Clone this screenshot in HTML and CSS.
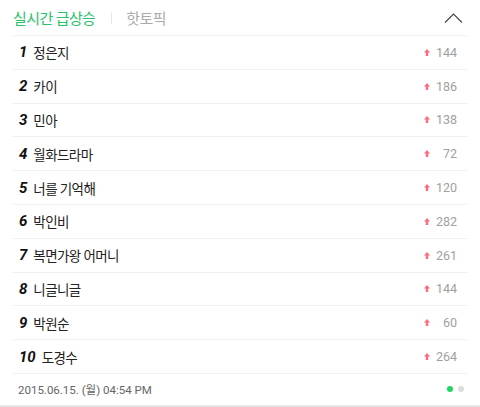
FILE: index.html
```html
<!DOCTYPE html>
<html lang="ko">
<head>
<meta charset="utf-8">
<link rel="stylesheet" href="styles.css">
</head>
<body>
<div class="widget">
  <div class="tabs">
    <span class="tab active">실시간 급상승</span>
    <span class="sep"></span>
    <span class="tab">핫토픽</span>
    <svg class="chev" width="19" height="10" viewBox="0 0 19 10"><path d="M1 9.5 L9.5 1 L18 9.5" fill="none" stroke="#444" stroke-width="1.1"/></svg>
  </div>
  <ul class="list">
    <li class="row"><span class="rank">1</span><span class="name">정은지</span><span class="up"><svg width="6" height="7" viewBox="0 0 6 7"><path d="M3 0 L6 3.4 L4.2 3.4 L4.2 7 L1.8 7 L1.8 3.4 L0 3.4 Z" fill="#ff6b7d"/></svg></span><span class="num">144</span></li>
    <li class="row"><span class="rank">2</span><span class="name">카이</span><span class="up"><svg width="6" height="7" viewBox="0 0 6 7"><path d="M3 0 L6 3.4 L4.2 3.4 L4.2 7 L1.8 7 L1.8 3.4 L0 3.4 Z" fill="#ff6b7d"/></svg></span><span class="num">186</span></li>
    <li class="row"><span class="rank">3</span><span class="name">민아</span><span class="up"><svg width="6" height="7" viewBox="0 0 6 7"><path d="M3 0 L6 3.4 L4.2 3.4 L4.2 7 L1.8 7 L1.8 3.4 L0 3.4 Z" fill="#ff6b7d"/></svg></span><span class="num">138</span></li>
    <li class="row"><span class="rank">4</span><span class="name">월화드라마</span><span class="up"><svg width="6" height="7" viewBox="0 0 6 7"><path d="M3 0 L6 3.4 L4.2 3.4 L4.2 7 L1.8 7 L1.8 3.4 L0 3.4 Z" fill="#ff6b7d"/></svg></span><span class="num">72</span></li>
    <li class="row"><span class="rank">5</span><span class="name">너를 기억해</span><span class="up"><svg width="6" height="7" viewBox="0 0 6 7"><path d="M3 0 L6 3.4 L4.2 3.4 L4.2 7 L1.8 7 L1.8 3.4 L0 3.4 Z" fill="#ff6b7d"/></svg></span><span class="num">120</span></li>
    <li class="row"><span class="rank">6</span><span class="name">박인비</span><span class="up"><svg width="6" height="7" viewBox="0 0 6 7"><path d="M3 0 L6 3.4 L4.2 3.4 L4.2 7 L1.8 7 L1.8 3.4 L0 3.4 Z" fill="#ff6b7d"/></svg></span><span class="num">282</span></li>
    <li class="row"><span class="rank">7</span><span class="name">복면가왕 어머니</span><span class="up"><svg width="6" height="7" viewBox="0 0 6 7"><path d="M3 0 L6 3.4 L4.2 3.4 L4.2 7 L1.8 7 L1.8 3.4 L0 3.4 Z" fill="#ff6b7d"/></svg></span><span class="num">261</span></li>
    <li class="row"><span class="rank">8</span><span class="name">니글니글</span><span class="up"><svg width="6" height="7" viewBox="0 0 6 7"><path d="M3 0 L6 3.4 L4.2 3.4 L4.2 7 L1.8 7 L1.8 3.4 L0 3.4 Z" fill="#ff6b7d"/></svg></span><span class="num">144</span></li>
    <li class="row"><span class="rank">9</span><span class="name">박원순</span><span class="up"><svg width="6" height="7" viewBox="0 0 6 7"><path d="M3 0 L6 3.4 L4.2 3.4 L4.2 7 L1.8 7 L1.8 3.4 L0 3.4 Z" fill="#ff6b7d"/></svg></span><span class="num">60</span></li>
    <li class="row"><span class="rank">10</span><span class="name">도경수</span><span class="up"><svg width="6" height="7" viewBox="0 0 6 7"><path d="M3 0 L6 3.4 L4.2 3.4 L4.2 7 L1.8 7 L1.8 3.4 L0 3.4 Z" fill="#ff6b7d"/></svg></span><span class="num">264</span></li>
  </ul>
  <div class="footer">
    <span class="time">2015.06.15. (월) 04:54 PM</span>
    <span class="dots"><span class="dot on"></span><span class="dot"></span></span>
  </div>
</div>
<div class="band"></div>
</body>
</html>
```
FILE: styles.css
```css
html, body {
  margin: 0;
  padding: 0;
  background: #fff;
}
body {
  font-family: Roboto, "Noto Sans CJK KR", sans-serif;
  width: 480px;
  height: 407px;
  overflow: hidden;
}
.widget {
  padding: 0 13px;
  height: 405px;
  box-sizing: border-box;
}
.tabs {
  display: flex;
  align-items: center;
  height: 36px;
  border-bottom: 1px solid #f0f0f0;
  box-sizing: border-box;
}
.tab {
  font-size: 15px;
  color: #aaa;
  letter-spacing: -0.6px;
}
.tab.active {
  color: #27c26a;
}
.sep {
  width: 1px;
  height: 12px;
  background: #e8e8e8;
  margin: 0 14px 0 16px;
}
.chev {
  margin-left: auto;
  margin-right: 4px;
  margin-top: 1px;
}
.list {
  list-style: none;
  margin: 0;
  padding: 0;
}
.row {
  display: flex;
  align-items: center;
  height: 33.8px;
  border-bottom: 1px solid #f0f0f0;
  box-sizing: border-box;
  padding-left: 6px;
}
.rank {
  font-weight: 700;
  font-style: italic;
  font-size: 15px;
  color: #111;
  margin-right: 6px;
}
.name {
  font-size: 13.5px;
  color: #222;
  letter-spacing: -0.6px;
}
.up {
  margin-left: auto;
  display: flex;
  align-items: center;
  margin-right: 3px;
}
.num {
  font-size: 12.5px;
  color: #a0a0a0;
  width: 24px;
  text-align: right;
  margin-right: 10px;
}
.footer {
  display: flex;
  align-items: center;
  height: 31px;
  padding-left: 5px;
}
.time {
  font-size: 11.5px;
  color: #666;
}
.dots {
  margin-left: auto;
  display: flex;
  gap: 5px;
  margin-right: 3px;
}
.dot {
  width: 6px;
  height: 6px;
  border-radius: 50%;
  background: #ddd;
}
.dot.on {
  background: #1ed760;
}
.band {
  height: 2px;
  background: #e6e6e6;
}
```
